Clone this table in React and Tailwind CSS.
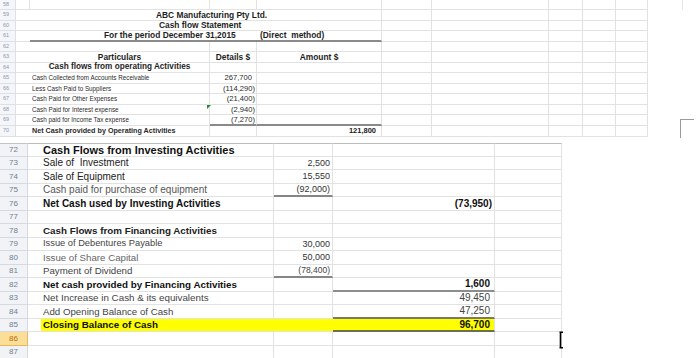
import React from "react";

const G = "border-[#e2e2e2]";

function TopHead({ n }) {
  return (
    <div className="w-[16px] shrink-0 h-full bg-[#f4f6f9] border-r border-b border-[#dde1e6] text-[5.5px] leading-none text-[#8a99ae] pl-[3px] flex items-center">
      {n}
    </div>
  );
}

function TopTail() {
  return (
    <>
      <div className={`w-[50px] shrink-0 h-full border-r border-b ${G}`} />
      <div className={`w-[117px] shrink-0 h-full border-r border-b ${G}`} />
      <div className={`w-[34px] shrink-0 h-full border-r border-b ${G}`} />
      <div className={`w-[33px] shrink-0 h-full border-r border-b ${G}`} />
      <div className={`w-[32px] shrink-0 h-full border-r border-b ${G}`} />
    </>
  );
}

function TopRow({ n, h, children }) {
  return (
    <div className={`flex ${h}`}>
      <TopHead n={n} />
      {children}
      <TopTail />
    </div>
  );
}

function TopData({ n, h, label, num, bold, amount, under, neg }) {
  return (
    <TopRow n={n} h={h}>
      <div className={`w-[194px] shrink-0 h-full border-r border-b ${G} flex items-center pl-[16px] text-[#2a2a2a] whitespace-pre leading-none`}>
        {bold ? (
          <span className="inline-block text-[7.2px] font-bold">{label}</span>
        ) : (
          <span className="inline-block text-[7.6px] scale-x-[0.83] origin-left">{label}</span>
        )}
      </div>
      <div className={`w-[47px] shrink-0 h-full border-r ${under ? "border-b-2 border-b-[#8a8a8a] border-r-[#e2e2e2]" : `border-b ${G}`} flex items-center justify-end ${neg ? "pr-[1px]" : "pr-[4px]"} text-[7.6px] text-[#2a2a2a] leading-none`}>
        {num}
      </div>
      <div className={`w-[125px] shrink-0 h-full border-r ${under ? "border-b-2 border-b-[#8a8a8a] border-r-[#e2e2e2]" : `border-b ${G}`} flex items-center justify-end pr-[5px] text-[7.5px] font-bold text-[#222] leading-none`}>
        {amount}
      </div>
    </TopRow>
  );
}

function BHead({ n, sel, top }) {
  return (
    <div
      className={`w-[28px] shrink-0 h-full border-r border-b flex items-center justify-center text-[8px] leading-none ${
        sel
          ? "bg-[#fbdf98] border-[#e9b85a] text-[#b8700a]"
          : "bg-[#f1f3f6] border-[#d6dae0] text-[#6f7f95]"
      } ${top ? "border-t border-t-[#c4c4c4]" : ""}`}
    >
      {n}
    </div>
  );
}

function BRow({ n, h, sel, top, label, lc, c, cUnder, d, dc, dUnder, yellow, cFont }) {
  const t = top ? "border-t border-t-[#bdbdbd]" : "";
  const y = yellow ? "bg-[#ffff00]" : "";
  return (
    <div className={`flex ${h}`}>
      <BHead n={n} sel={sel} top={top} />
      <div className={`w-[13px] shrink-0 h-full border-b ${G} ${t}`} />
      <div className={`w-[233px] shrink-0 h-full ${yellow ? "border-b border-b-[#e2e2e2]" : `border-r border-b ${G}`} ${t} ${y} flex items-center pl-[2px] whitespace-pre leading-none ${lc || ""}`}>
        {label}
      </div>
      <div className={`w-[59px] shrink-0 h-full ${yellow ? "" : "border-r"} ${cUnder ? "border-b-2 border-b-[#858585] border-r-[#e2e2e2]" : `border-b ${G}`} ${t} ${y} flex items-center justify-end pr-[2px] leading-none ${cFont || "text-[9px] text-[#333]"}`}>
        {c}
      </div>
      <div className={`w-[162px] shrink-0 h-full border-r ${dUnder ? `${dUnder} border-r-[#e2e2e2]` : `border-b ${G}`} ${t} ${y} flex items-center justify-end leading-none ${dc || ""}`}>
        {d}
      </div>
      <div className={`w-[67px] shrink-0 h-full border-r border-b ${G} ${t}`} />
    </div>
  );
}

function TitleRow({ n, h, last, children }) {
  return (
    <TopRow n={n} h={h}>
      <div className={`w-[14px] shrink-0 h-full border-b ${G}`} />
      <div
        className={`w-[352px] shrink-0 h-full border-r border-r-[#e2e2e2] ${
          last ? "border-b-2 border-b-[#8a8a8a]" : "border-b border-b-[#e2e2e2]"
        } flex items-center text-[8.4px] font-bold text-[#1e1e1e] leading-none whitespace-pre`}
      >
        {children}
      </div>
    </TopRow>
  );
}

export default function App() {
  return (
    <div className="relative w-[700px] h-[358px] bg-white overflow-hidden font-['Liberation_Sans',Arial,sans-serif]">
      {/* Top sheet */}
      <div className="flex flex-col w-[648px]">
        <div className="flex h-[10px]">
          <TopHead n="58" />
          <div className={`w-[14px] shrink-0 h-full border-r border-b ${G}`} />
          <div className={`w-[180px] shrink-0 h-full border-r border-b ${G}`} />
          <div className={`w-[47px] shrink-0 h-full border-r border-b ${G}`} />
          <div className={`w-[125px] shrink-0 h-full border-r border-b ${G}`} />
          <TopTail />
        </div>
        <TitleRow n="59" h="h-[11px]">
          <span className="pl-[126px]">ABC Manufacturing Pty Ltd.</span>
        </TitleRow>
        <TitleRow n="60" h="h-[10px]">
          <span className="pl-[129px]">Cash flow Statement</span>
        </TitleRow>
        <TitleRow n="61" h="h-[11px]" last>
          <span className="inline-block pl-[74px] w-[230px]">For the period December 31,2015</span>
          <span>(Direct  method)</span>
        </TitleRow>
        <TopRow n="62" h="h-[10px]">
          <div className={`w-[194px] shrink-0 h-full border-r border-b ${G}`} />
          <div className={`w-[47px] shrink-0 h-full border-r border-b ${G}`} />
          <div className={`w-[125px] shrink-0 h-full border-r border-b ${G}`} />
        </TopRow>
        <TopRow n="63" h="h-[11px]">
          <div className={`w-[14px] shrink-0 h-full border-b ${G}`} />
          <div className={`w-[180px] shrink-0 h-full border-r border-b ${G} flex items-center justify-center text-[8.4px] font-bold text-[#1e1e1e]`}>
            Particulars
          </div>
          <div className={`w-[47px] shrink-0 h-full border-r border-b ${G} flex items-center justify-center text-[8.4px] font-bold text-[#1e1e1e] whitespace-nowrap`}>
            Details $
          </div>
          <div className={`w-[125px] shrink-0 h-full border-r border-b ${G} flex items-center justify-center text-[8.4px] font-bold text-[#1e1e1e]`}>
            Amount $
          </div>
        </TopRow>
        <TopRow n="64" h="h-[10px]">
          <div className={`w-[14px] shrink-0 h-full border-b ${G}`} />
          <div className={`w-[180px] shrink-0 h-full border-r border-b ${G} flex items-center justify-center text-[8.2px] font-bold text-[#1e1e1e] whitespace-nowrap`}>
            Cash flows from operating Activities
          </div>
          <div className={`w-[47px] shrink-0 h-full border-r border-b ${G}`} />
          <div className={`w-[125px] shrink-0 h-full border-r border-b ${G}`} />
        </TopRow>
        <TopData n="65" h="h-[11px]" label="Cash Collected from Accounts Receivable" num="267,700" />
        <TopData n="66" h="h-[10px]" label="Less Cash Paid to Suppliers" num="(114,290)" neg />
        <TopData n="67" h="h-[11px]" label="Cash Paid for Other Expenses" num="(21,400)" neg />
        <TopData n="68" h="h-[10px]" label="Cash Paid for Interest expense" num="(2,940)" neg />
        <TopData n="69" h="h-[11px]" label="Cash paid for Income Tax expense" num="(7,270)" neg under />
        <TopData n="70" h="h-[11px]" label="Net Cash provided by Operating Activities" bold amount="121,800" />
      </div>

      <div className="h-[6px]" />

      {/* Bottom sheet */}
      <div className="flex flex-col w-[562px]">
        <BRow n="72" h="h-[14px]" top label="Cash Flows from Investing Activities" lc="text-[11px] font-bold text-[#111]" />
        <BRow n="73" h="h-[13px]" label="Sale of  Investment" lc="text-[10px] text-[#222]" c="2,500" />
        <BRow n="74" h="h-[14px]" label="Sale of Equipment" lc="text-[10px] text-[#222]" c="15,550" />
        <BRow n="75" h="h-[13px]" label="Cash paid for purchase of equipment" lc="text-[10px] text-[#555]" c="(92,000)" cUnder />
        <BRow n="76" h="h-[14px]" label="Net Cash used by Investing Activities" lc="text-[10px] font-bold text-[#111]" d="(73,950)" dc="pr-[2px] text-[10px] font-bold text-[#111]" />
        <BRow n="77" h="h-[13px]" />
        <BRow n="78" h="h-[14px]" label="Cash Flows from Financing Activities" lc="text-[9.8px] font-bold text-[#222]" />
        <BRow n="79" h="h-[13px]" label="Issue of Debentures Payable" lc="text-[9.3px] text-[#444]" c="30,000" />
        <BRow n="80" h="h-[14px]" label="Issue of Share Capital" lc="text-[9.7px] text-[#666]" c="50,000" />
        <BRow n="81" h="h-[13px]" label="Payment of Dividend" lc="text-[9.7px] text-[#444]" c="(78,400)" cUnder cFont="text-[8.5px] text-[#444]" />
        <BRow n="82" h="h-[14px]" label="Net cash provided by Financing Activities" lc="text-[9.8px] font-bold text-[#111]" d="1,600" dc="pr-[4px] text-[10px] font-bold text-[#111]" dUnder="border-b-2 border-b-[#8d8d8d]" />
        <BRow n="83" h="h-[13px]" label="Net Increase in Cash & its equivalents" lc="text-[9.8px] text-[#444]" d="49,450" dc="pr-[4px] text-[10px] text-[#444]" />
        <BRow n="84" h="h-[14px]" label="Add Opening Balance of Cash" lc="text-[9.7px] text-[#444]" d="47,250" dc="pr-[4px] text-[10px] text-[#444]" dUnder="border-b-2 border-b-[#7a7a6a]" />
        <BRow n="85" h="h-[13px]" yellow label="Closing Balance of Cash" lc="text-[9.8px] font-bold text-[#111]" d="96,700" dc="pr-[4px] text-[10px] font-bold text-[#111]" dUnder="border-b-2 border-b-[#6e6e50]" />
        <BRow n="86" h="h-[14px]" sel />
        <BRow n="87" h="h-[13px]" />
      </div>

      {/* overlays */}
      <div className="absolute left-[682px] top-0 w-px h-[10px] bg-[#e6e6e6]" />
      <div className="absolute left-[680px] top-[119px] w-[14px] h-[19px] border-t border-l border-[#9a9a9a]" />
      <svg className="absolute left-[207px] top-[105px]" width="4" height="4" viewBox="0 0 4 4">
        <polygon points="0,0 4,0 0,4" fill="#1f8a2e" />
      </svg>
      <svg className="absolute left-[558px] top-[331px]" width="7" height="18" viewBox="0 0 7 18">
        <path d="M1.5 1.2 H5 M2.5 1 V17 M1.5 16.8 H5" stroke="#000" strokeWidth="1.6" fill="none" />
      </svg>
    </div>
  );
}
